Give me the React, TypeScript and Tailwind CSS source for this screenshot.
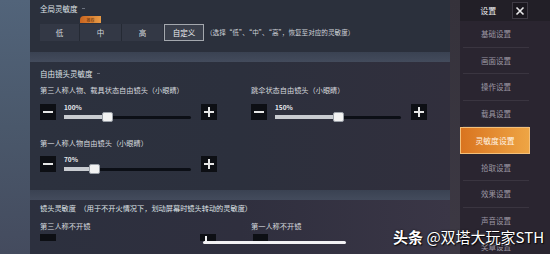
import React from "react";

const font = { fontFamily: '"Noto Sans CJK SC", "Noto Sans", sans-serif' };

function StepButton({ sign }: { sign: "-" | "+" }) {
  return (
    <div className="w-[16px] h-[16px] bg-[#0d0f14] flex items-center justify-center shrink-0">
      <div className="relative w-[10px] h-[10px] flex items-center justify-center">
        <div className="absolute w-[10px] h-[2px] bg-[#e6e6e6]" />
        {sign === "+" && <div className="absolute w-[2px] h-[10px] bg-[#e6e6e6]" />}
      </div>
    </div>
  );
}

function Slider({ value, pct, width }: { value: string; pct: number; width: number }) {
  return (
    <div className="flex items-start gap-[8px]">
      <StepButton sign="-" />
      <div className="flex flex-col" style={{ width }}>
        <span className="text-[6.5px] leading-[7px] font-bold text-[#e8eaee]">{value}</span>
        <div className="relative h-[12px] flex items-center">
          <div className="w-full h-[3px] bg-[#0c0f16] rounded-full" />
          <div
            className="absolute left-0 h-[4px] bg-[#c9ccd1]"
            style={{ width: `${pct}%` }}
          />
          <div
            className="absolute w-[11px] h-[10px] bg-[#f2f2f2] rounded-[2px] border border-[#9aa0a8]"
            style={{ left: `calc(${pct}% - 5px)` }}
          />
        </div>
      </div>
      <div className="ml-[2px]">
        <StepButton sign="+" />
      </div>
    </div>
  );
}

const menu = ["基础设置", "画面设置", "操作设置", "载具设置", "灵敏度设置", "拾取设置", "效果设置", "声音设置", "奖章设置"];

export default function App() {
  return (
    <div
      className="relative w-[550px] h-[254px] overflow-hidden flex bg-[#2a2530] text-[#d6d9de] leading-[9px]"
      style={font}
    >
      {/* left backdrop */}
      <div className="w-[30px] h-full bg-gradient-to-b from-[#52647a] via-[#4a586b] to-[#444b5e] shrink-0" />

      {/* main panels */}
      <div className="w-[420px] h-full flex flex-col bg-[#3c4454] shrink-0">
        {/* global sensitivity */}
        <section className="h-[52px] shrink-0 bg-[#2b303c] px-[10px] pt-[4px]">
          <div className="flex items-center gap-[4px]">
            <span className="text-[7.5px] leading-[9px] text-[#dfe2e6]">全局灵敏度</span>
            <span className="w-[3px] h-[1px] bg-[#6d7380]" />
          </div>
          <div className="relative flex items-center mt-[11px]">
            <div className="absolute left-[40px] -top-[8px] w-[21px] h-[7px] rounded-tl-[4px] bg-gradient-to-r from-[#c9641e] to-[#e89a45] flex items-center justify-center">
              <span className="text-[4px] leading-[4px] text-[#5c2a08]">推荐</span>
            </div>
            <div className="flex h-[17px] bg-[#333845]">
              <div className="w-[40px] flex items-center justify-center text-[7.5px] border-r border-[#252a34]">低</div>
              <div className="w-[42px] flex items-center justify-center text-[7.5px] border-r border-[#252a34]">中</div>
              <div className="w-[41px] flex items-center justify-center text-[7.5px]">高</div>
            </div>
            <div className="ml-[1px] w-[40px] h-[17px] border border-[#a4a8ae] bg-[#3a3f4b] flex items-center justify-center text-[7.5px] text-[#eef0f2]">
              自定义
            </div>
            <span className="ml-[2px] text-[6.6px] text-[#cfd3d9] whitespace-nowrap">
              （选择“低”、“中”、“高”，恢复至对应的灵敏度）
            </span>
          </div>
        </section>

        <div className="h-[10px] shrink-0 bg-gradient-to-b from-[#3a4252] to-[#434b5c]" />

        {/* free camera sensitivity */}
        <section className="h-[128px] shrink-0 bg-gradient-to-r from-[#2c313e] via-[#2c303d] to-[#312f3d] px-[10px] pt-[7px]">
          <div className="flex items-center gap-[4px]">
            <span className="text-[7.5px] leading-[9px] text-[#dfe2e6]">自由镜头灵敏度</span>
            <span className="w-[3px] h-[1px] bg-[#6d7380]" />
          </div>
          <div className="grid grid-cols-[211px_1fr] mt-[8px]">
            <div className="flex flex-col">
              <span className="text-[7.2px] leading-[9px] whitespace-nowrap">第三人称人物、载具状态自由镜头（小眼睛）</span>
              <div className="mt-[9px]">
                <Slider value="100%" pct={34} width={127} />
              </div>
              <span className="mt-[16px] text-[7.2px] leading-[9px] whitespace-nowrap">第一人称人物自由镜头（小眼睛）</span>
              <div className="mt-[8px]">
                <Slider value="70%" pct={24} width={127} />
              </div>
            </div>
            <div className="flex flex-col">
              <span className="text-[7.2px] leading-[9px] whitespace-nowrap">跳伞状态自由镜头（小眼睛）</span>
              <div className="mt-[9px]">
                <Slider value="150%" pct={50} width={126} />
              </div>
            </div>
          </div>
        </section>

        <div className="h-[10px] shrink-0 bg-gradient-to-b from-[#3a4252] to-[#434b5c]" />

        {/* camera sensitivity */}
        <section className="h-[54px] shrink-0 bg-gradient-to-r from-[#2c303e] via-[#2f2f3e] to-[#3a3646] px-[10px] pt-[4px]">
          <div className="text-[7.2px] leading-[9px] whitespace-nowrap text-[#dfe2e6]">
            镜头灵敏度　（用于不开火情况下，划动屏幕时镜头转动的灵敏度）
          </div>
          <div className="grid grid-cols-[211px_1fr] mt-[9px]">
            <div className="flex flex-col">
              <span className="text-[7.2px] leading-[9px]">第三人称不开镜</span>
              <div className="mt-[3px] flex w-[176px] justify-between">
                <div className="w-[16px] h-[7px] bg-[#0d0f14]" />
                <div className="relative w-[16px] h-[7px] bg-[#0d0f14]">
                  <div className="absolute left-[5px] top-[2px] w-[2px] h-[6px] bg-[#f2f2f4]" />
                </div>
              </div>
              <div className="ml-[163px] w-[143px] h-[3px] bg-[#f2f2f4] rounded-full" />
            </div>
            <div className="flex flex-col">
              <span className="text-[7.2px] leading-[9px]">第一人称不开镜</span>
              <div className="mt-[3px] ml-[2px] w-[15px] h-[7px] bg-[#0d0f14]" />
            </div>
          </div>
        </section>
      </div>

      {/* separator strip */}
      <div className="w-[10px] h-full shrink-0 bg-gradient-to-b from-[#35323b] to-[#3d3944]" />

      {/* side menu */}
      <aside className="flex-1 flex flex-col bg-[#2a2530] overflow-hidden">
        <div className="h-[21px] shrink-0 flex items-center bg-[#221f27] pl-[8px] pr-[22px] gap-[3px]">
          <div className="w-[42px] h-[18px] flex items-center justify-center text-[8px] text-[#eef0f2]">设置</div>
          <div className="w-[17px] h-[17px] bg-[#1a171e] border border-[#3e3a44] flex items-center justify-center">
            <svg width="10" height="10" viewBox="0 0 10 10">
              <path d="M1.5 1.5 L8.5 8.5 M8.5 1.5 L1.5 8.5" stroke="#e8e8ea" strokeWidth="1.6" />
            </svg>
          </div>
        </div>
        {menu.map((m) => {
          const active = m === "灵敏度设置";
          return active ? (
            <div
              key={m}
              className="h-[27px] shrink-0 w-[70px] flex items-center justify-center bg-gradient-to-r from-[#d9741f] to-[#eea544] border border-[#f3c07a] text-[7.8px] text-[#fff4e6]"
            >
              {m}
            </div>
          ) : (
            <div
              key={m}
              className="h-[26.6px] shrink-0 w-[66px] ml-[3px] flex items-center justify-center border-b border-[#3a3540] text-[7.5px] text-[#9d98a4]"
            >
              {m}
            </div>
          );
        })}
      </aside>

      {/* watermark */}
      <div
        className="absolute left-[393px] top-[227px] text-[15px] leading-[20px] text-white whitespace-nowrap"
        style={{ textShadow: "0 0 2px rgba(0,0,0,0.9), 1px 1px 1px rgba(0,0,0,0.8)" }}
      >
        <span className="font-bold">头条</span> @双塔大玩家STH
      </div>
    </div>
  );
}
